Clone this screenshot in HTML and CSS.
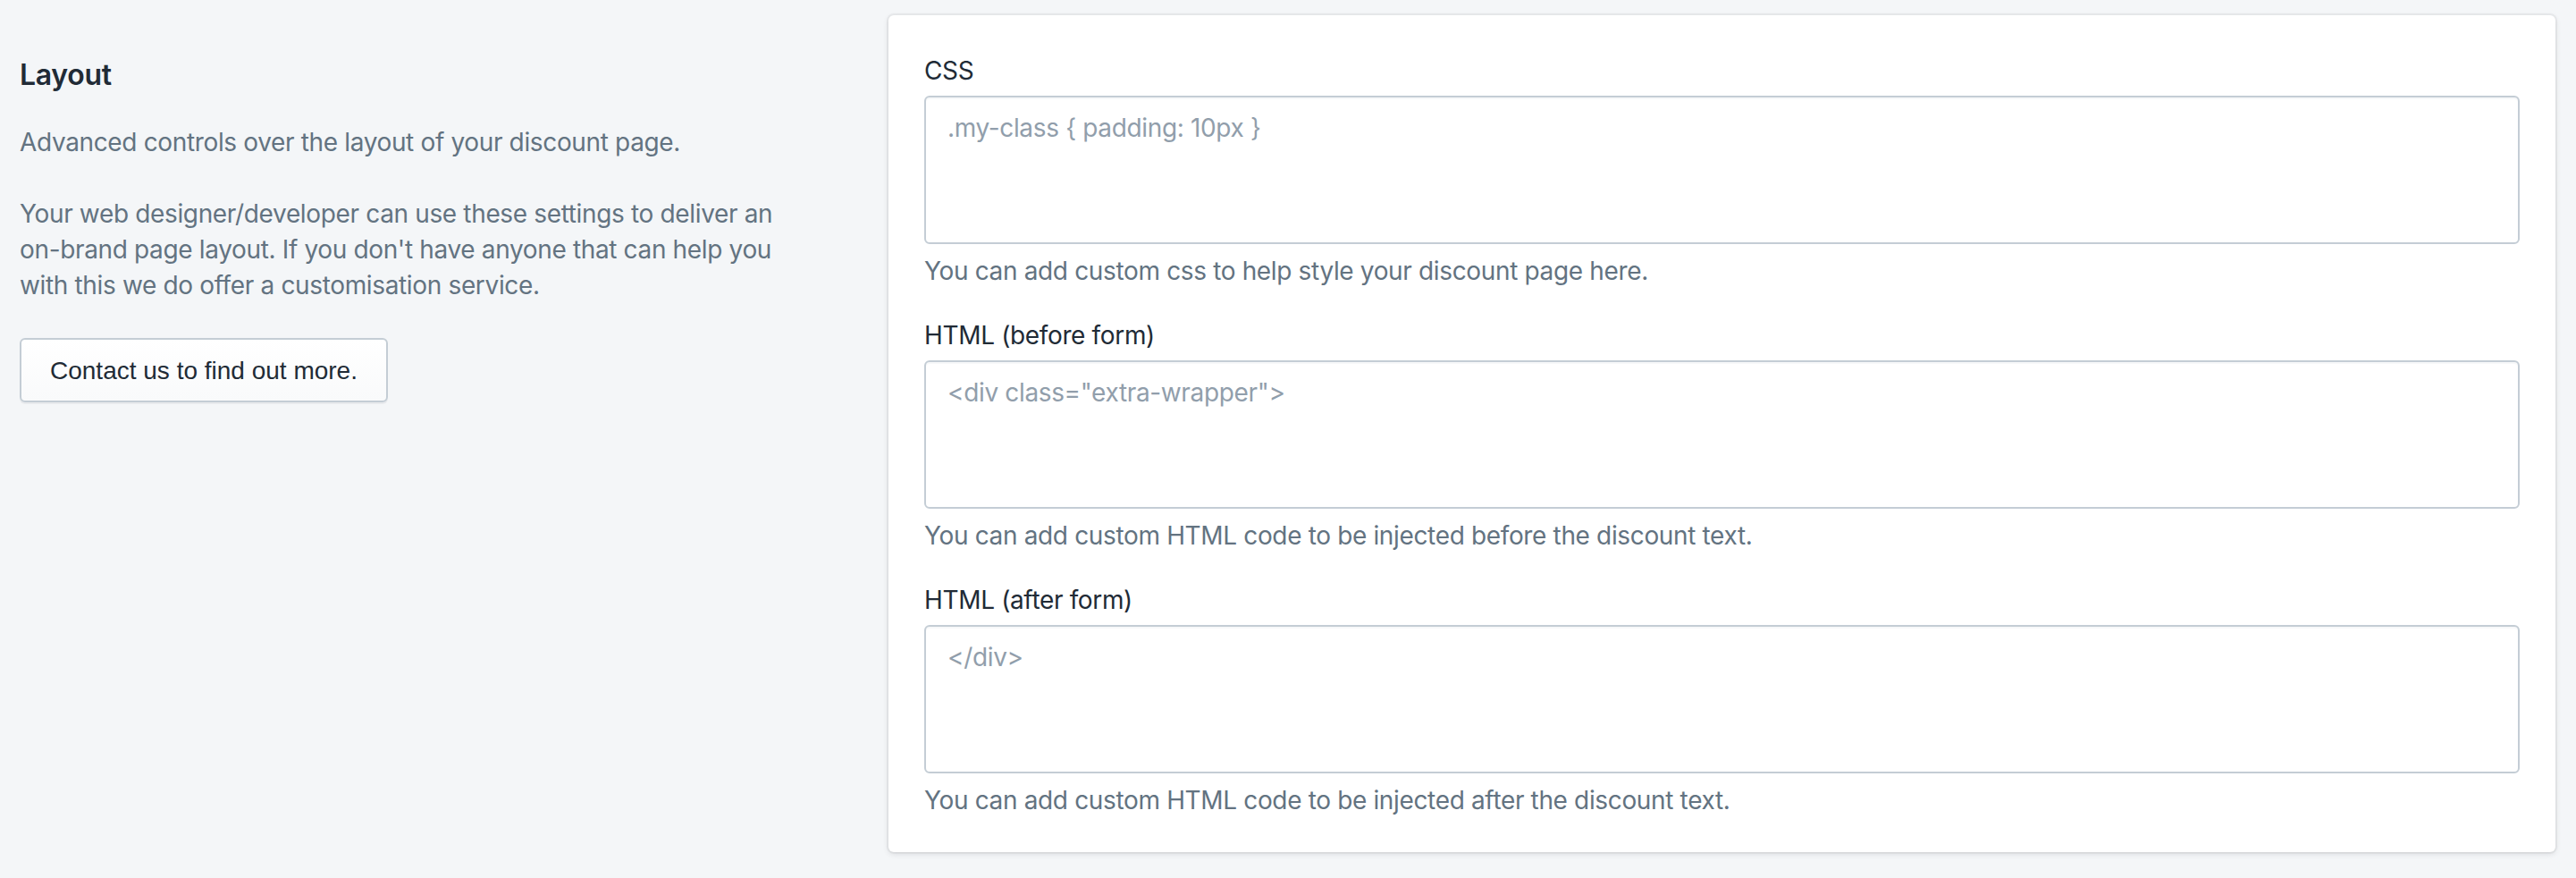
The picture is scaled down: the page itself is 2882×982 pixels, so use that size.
FILE: index.html
```html
<!DOCTYPE html>
<html>
<head lang="en">
    <meta charset="UTF-8">
    <title>Discount page layout</title>
    <link rel="stylesheet" href="styles.css">
</head>
<body>
<div class="layout">
    <div class="annotation">
        <h2 class="annotation-title">Layout</h2>
        <p class="annotation-text">Advanced controls over the layout of your discount page.</p>
        <p class="annotation-text">Your web designer/developer can use these settings to deliver an on-brand page layout. If you don't have anyone that can help you with this we do offer a customisation service.</p>
        <button class="contact-button">Contact us to find out more.</button>
    </div>
    <div class="card">
        <div class="field">
            <label class="field-label" for="custom-css">CSS</label>
            <textarea class="field-input" id="custom-css" placeholder=".my-class { padding: 10px }"></textarea>
            <div class="field-help">You can add custom css to help style your discount page here.</div>
        </div>
        <div class="field">
            <label class="field-label" for="html-before">HTML (before form)</label>
            <textarea class="field-input" id="html-before" placeholder='<div class="extra-wrapper">'></textarea>
            <div class="field-help">You can add custom HTML code to be injected before the discount text.</div>
        </div>
        <div class="field">
            <label class="field-label" for="html-after">HTML (after form)</label>
            <textarea class="field-input" id="html-after" placeholder="</div>"></textarea>
            <div class="field-help">You can add custom HTML code to be injected after the discount text.</div>
        </div>
    </div>
</div>
</body>
</html>
```

FILE: styles.css
```css
body{
    margin: 0;
    background: #f4f6f8;
    font-family: Inter, "Noto Sans", sans-serif;
    font-size: 28px;
    line-height: 40px;
    color: #212b36;
}
.layout{
    display: flex;
    align-items: flex-start;
    padding: 17px 23px 29px 22px;
}
.annotation{
    flex: 0 0 880px;
    margin-right: 92px;
    padding-top: 43px;
}
.annotation-title{
    margin: 0 0 31px;
    font-size: 32px;
    line-height: 48px;
    font-weight: 600;
    letter-spacing: -0.3px;
}
.annotation-text{
    margin: 0 0 40px;
    color: #637381;
    letter-spacing: -0.35px;
}
.annotation-text:last-of-type{
    margin-bottom: 39px;
}
.contact-button{
    height: 72px;
    padding: 2px 32px 0;
    font: 28px/40px "Liberation Sans", Arial, sans-serif;
    color: #212b36;
    background: linear-gradient(180deg, #fff, #f9fafb);
    border: 2px solid #c4cdd5;
    border-radius: 6px;
    box-shadow: 0 2px 0 0 rgba(22, 29, 37, 0.05);
}
.card{
    flex: 1;
    padding: 42px 40px 38px;
    background: #fff;
    border-radius: 6px;
    box-shadow: 0 0 0 2px rgba(63, 63, 68, 0.05), 0 2px 6px 0 rgba(63, 63, 68, 0.15);
}
.field + .field{
    margin-top: 32px;
}
.field-label{
    display: block;
    margin-bottom: 8px;
    letter-spacing: -0.35px;
}
.field-input{
    display: block;
    box-sizing: border-box;
    width: 100%;
    height: 166px;
    margin: 0;
    padding: 14px 24px 12px;
    font: inherit;
    letter-spacing: -0.35px;
    color: #212b36;
    border: 2px solid #c4cdd5;
    border-radius: 6px;
    box-shadow: inset 0 2px 0 0 rgba(99, 115, 129, 0.05);
    resize: none;
    outline: none;
}
.field-input::placeholder{
    color: #919eab;
}
.field-help{
    margin-top: 10px;
    color: #637381;
    letter-spacing: -0.35px;
}
```
